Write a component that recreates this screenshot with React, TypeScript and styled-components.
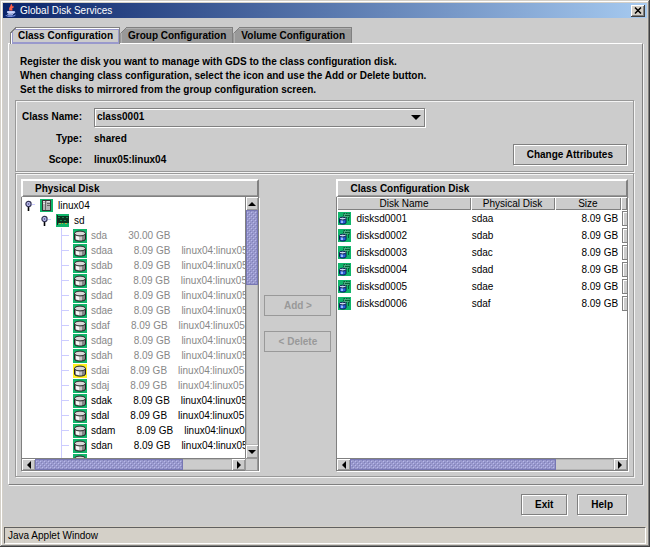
import React, { useState } from 'react';
import styled, { createGlobalStyle, css } from 'styled-components';

const GlobalStyle = createGlobalStyle`
  *, *::before, *::after { box-sizing: border-box; }
  body { margin: 0; background: #cccccc; }
  body, button, select, table {
    font-family: "Liberation Sans", Arial, sans-serif;
    font-size: 10px;
    line-height: 14px;
    color: #000;
  }
  button, select { margin: 0; padding: 0; border: 0; border-radius: 0; background: none; }
`;

const raised = css`
  border: 1px solid #808080;
  box-shadow: inset 1px 1px #fff, 1px 1px #fff;
`;

const etched = css`
  border: 1px solid #999;
  box-shadow: inset 1px 1px #f4f4f4, 1px 1px #f4f4f4;
`;

const Window = styled.div`
  display: flex;
  flex-direction: column;
  min-height: 100vh;
  padding: 3px;
  background: #d4d0c8;
  box-shadow: inset -1px -1px #404040, inset 1px 1px #d4d0c8, inset -2px -2px #808080, inset 2px 2px #fff;
`;

const TitleBar = styled.header`
  display: flex;
  align-items: center;
  gap: 3px;
  height: 15px;
  padding: 0 2px;
  color: #fff;
  background: linear-gradient(90deg, #0a246a, #a6caf0);
`;

const Title = styled.h1`
  flex: 1;
  margin: 0;
  font-size: 10px;
  font-weight: 400;
`;

const CloseButton = styled.button`
  display: flex;
  align-items: center;
  justify-content: center;
  width: 14px;
  height: 12px;
  background: #d4d0c8;
  box-shadow: inset -1px -1px #404040, inset 1px 1px #fff, inset -2px -2px #808080;
`;

const Body = styled.main`
  flex: 1;
  display: flex;
  flex-direction: column;
  padding: 9px 4px 11px 5px;
  background: #ccc;
`;

const TabList = styled.div`
  display: flex;
  padding-left: 2px;
`;

const Tab = styled.button<{ $active: boolean }>`
  position: relative;
  height: ${p => (p.$active ? 17 : 16)}px;
  margin-bottom: ${p => (p.$active ? -1 : 0)}px;
  padding: 0 6px 0 7px;
  z-index: ${p => (p.$active ? 1 : 0)};
  font-weight: 700;
  white-space: nowrap;
  border: 1px solid #808080;
  border-bottom: 0;
  background: ${p => (p.$active ? '#ccc' : '#999')};
  box-shadow: ${p =>
    p.$active
      ? 'inset 1px 1px #fff, inset 2px 2px #9999cc, inset -1px -2px #9999cc'
      : 'inset 1px 1px #b0b0b0'};

  & + & { border-left-color: #999; }

  &::before {
    content: '';
    position: absolute;
    top: -1px;
    left: -1px;
    width: 6px;
    height: 6px;
    background: linear-gradient(135deg, #ccc 0 50%, #808080 50% 64%, transparent 64%);
  }
`;

const TabPanel = styled.section`
  flex: 1;
  display: flex;
  flex-direction: column;
  padding: 11px 8px 7px 6px;
  border: 1px solid #fff;
  border-right-color: #808080;
  border-bottom-color: #808080;
  box-shadow: 1px 1px #f4f4f4;
`;

const Intro = styled.p`
  margin: 0 0 3px;
  padding-left: 5px;
  font-weight: 700;
`;

const Line = styled.span`
  display: block;
`;

const ClassBox = styled.div`
  display: flex;
  align-items: flex-end;
  gap: 88px;
  margin-bottom: 1px;
  padding: 5px 6px 2px 1px;
  ${etched}
`;

const Fields = styled.div`
  flex: 1;
  display: grid;
  grid-template-columns: 65px 1fr;
  column-gap: 12px;
  grid-template-rows: 22px 22px 19px;
  align-items: center;
  font-weight: 700;
`;

const FieldLabel = styled.label`
  text-align: right;
  white-space: nowrap;
`;

const FieldName = styled.span`
  text-align: right;
`;

const Combo = styled.div`
  position: relative;
  height: 19px;

  svg {
    position: absolute;
    right: 4px;
    top: 7px;
    pointer-events: none;
  }
`;

const Select = styled.select`
  appearance: none;
  width: 100%;
  height: 19px;
  padding: 0 20px 0 2px;
  font-weight: 700;
  ${raised}
`;

const Button = styled.button`
  height: 21px;
  padding: 0 13px;
  font-weight: 700;
  white-space: nowrap;
  ${raised}

  &:disabled {
    width: 100%;
    padding: 0;
    color: #999;
    border-color: #999;
    box-shadow: none;
  }
`;

const AttributeAction = styled.div`
  padding-bottom: 4px;
`;

const DiskBox = styled.div`
  flex: 1;
  display: grid;
  grid-template-columns: 238fr 67px 291fr;
  gap: 5px;
  padding: 5px;
  ${etched}
`;

const Pane = styled.section`
  min-width: 0;
  display: flex;
  flex-direction: column;
`;

const PaneTitle = styled.h2`
  height: 18px;
  margin: 0;
  padding: 1px 12px;
  font-size: 10px;
  font-weight: 700;
  border: 1px solid #808080;
  border-top: 2px solid #fff;
  border-left: 2px solid #fff;
  border-right: 2px solid #808080;
  box-shadow: inset 0 -1px #999;
`;

const ScrollGrid = styled.div<{ $vertical?: boolean }>`
  flex: 1;
  display: grid;
  grid-template-columns: minmax(0, 1fr) ${p => (p.$vertical ? '13px' : '')};
  grid-template-rows: minmax(259px, 1fr) 13px;
  border: 1px solid #808080;
  border-top: 0;
  border-bottom: 0;
  box-shadow: 1px 1px #fff;
  background: #ccc;
`;

const Viewport = styled.div`
  height: 0;
  min-height: 100%;
  overflow: hidden;
  background: #fff;
`;

const MiddleActions = styled.div`
  display: flex;
  flex-direction: column;
  gap: 15px;
  padding-top: 116px;
`;

const ScrollBar = styled.div<{ $dir: 'row' | 'column' }>`
  display: flex;
  flex-direction: ${p => p.$dir};
  border: 0 solid #808080;
  border-width: ${p => (p.$dir === 'row' ? '1px 0' : '0 0 0 1px')};
  min-width: 0;
  min-height: 0;
`;

const ScrollArrow = styled.button`
  flex: 0 0 13px;
  display: flex;
  align-items: center;
  justify-content: center;
  box-shadow: inset 1px 1px #fff, inset -1px -1px #999;
`;

const Track = styled.div<{ $dir: 'row' | 'column' }>`
  flex: 1;
  display: flex;
  flex-direction: ${p => p.$dir};
  box-shadow: inset 0 0 0 1px #b4b4b4;
`;

const Thumb = styled.div<{ $size: number }>`
  flex: 0 0 ${p => p.$size}%;
  min-width: 0;
  min-height: 0;
  overflow: hidden;
  border: 1px solid #7777b4;
  background: #9999cc;

  svg { display: block; width: 100%; height: 100%; }
`;

const Corner = styled.div`
  border: 1px solid #999;
`;

const TreeRoot = styled.ul`
  margin: 0;
  padding: 1px 0 0 3px;
  list-style: none;
`;

const Branch = styled.ul`
  margin: 0;
  padding: 0 0 0 16px;
  list-style: none;
`;

const Leaves = styled.ul`
  margin: 0 0 0 20px;
  padding: 0;
  list-style: none;
  border-left: 1px solid #ccccff;
`;

const Item = styled.li``;

const NodeRow = styled.div`
  display: flex;
  align-items: center;
  height: 15px;
  gap: 5px;
  white-space: nowrap;
`;

const LeafRow = styled.li<{ $dim: boolean }>`
  display: flex;
  align-items: center;
  height: 15px;
  white-space: nowrap;
  color: ${p => (p.$dim ? '#888' : '#000')};

  &::before {
    content: '';
    flex: 0 0 7px;
    height: 1px;
    margin-right: 4px;
    background: #ccccff;
  }

  svg { flex: none; }
`;

const LeafName = styled.span`
  margin: 0 21px 0 4px;
`;

const LeafSize = styled.span`
  margin-right: 11px;
`;

const DiskTable = styled.table`
  width: 100%;
  table-layout: fixed;
  border-collapse: collapse;
`;

const HeadCell = styled.th<{ $width: number }>`
  width: ${p => p.$width}%;
  height: 13px;
  padding: 0;
  line-height: 13px;
  font-weight: 400;
  white-space: nowrap;
  background: #ccc;
  box-shadow: inset 1px 1px #fff, inset -1px -1px #808080;
`;

const Cell = styled.td<{ $right?: boolean }>`
  height: 17px;
  padding: 0 3px 0 1px;
  line-height: 15px;
  text-align: ${p => (p.$right ? 'right' : 'left')};
  white-space: nowrap;
  overflow: hidden;
`;

const EdgeCell = styled.td`
  height: 17px;
  padding: 1px 0 1px 1px;
`;

const EdgeBox = styled.div`
  height: 15px;
  border: 1px solid #808080;
  border-right: 0;
  background: #ccc;
  box-shadow: inset 1px 1px #fff;
`;

const NameCell = styled.span`
  display: flex;
  align-items: center;
  gap: 5px;
`;

const Footer = styled.div`
  display: flex;
  justify-content: flex-end;
  gap: 10px;
  padding: 9px 16px 0 0;
`;

const StatusBar = styled.footer`
  height: 17px;
  margin: 1px 1px 0;
  padding: 0 3px;
  line-height: 16px;
  border-top: 1px solid #606060;
  border-left: 1px solid #606060;
  border-bottom: 1px solid #fff;
  border-right: 1px solid #fff;
`;

const JavaLogo = () => (
  <svg width="12" height="13" viewBox="0 0 12 13" fill="none" aria-hidden="true">
    <path d="M6 0.5C8 2.5 3 3.5 5.5 6.5M8.5 2.5C6 4 6 4.5 7 6.5" stroke="#ff6048" strokeWidth="1.6" />
    <path d="M2.500 7.500h6v1.200c0 1-6 1-6 0zM8.500 7.500c2-.4 2 1.400-.4 1.900M2.500 10.500c1 .8 4.500.8 5.500 0" fill="#c8d4ff" stroke="#c8d4ff" strokeWidth="0.9" />
    <path d="M1 11c-.5 1.800 8.500 1.800 9.500 0" stroke="#8fa6ff" />
  </svg>
);

const CloseIcon = () => (
  <svg width="8" height="7" viewBox="0 0 8 7" aria-hidden="true">
    <path d="M1 0.500L7 6.500M7 0.500L1 6.500" stroke="#000" strokeWidth="1.500" />
  </svg>
);

const ARROWS = {
  left: 'M6 0v8L2 4z',
  right: 'M2 0v8L6 4z',
  up: 'M0 6h8L4 2z',
  down: 'M0 2h8L4 6z',
};

const Arrow = ({ to }: { to: keyof typeof ARROWS }) => (
  <svg width="8" height="8" viewBox="0 0 8 8" aria-hidden="true"><path d={ARROWS[to]} /></svg>
);

const ComboArrow = () => (
  <svg width="10" height="5" viewBox="0 0 10 5" aria-hidden="true"><path d="M0 0h10L5 5z" /></svg>
);

const Handle = () => (
  <svg width="10" height="13" viewBox="0 0 10 13" fill="none" aria-hidden="true">
    <path d="M3.500 7v5" stroke="#000" strokeWidth="1.600" />
    <path d="M7 5.500h3" stroke="#ccccff" />
    <circle cx="3.500" cy="5" r="2.600" fill="#ccccff" stroke="#333355" strokeWidth="1.200" />
    <circle cx="3.500" cy="5" r="1" fill="#666699" />
  </svg>
);

const ServerIcon = () => (
  <svg width="13" height="13" viewBox="0 0 13 13" aria-hidden="true">
    <path fill="#10b56a" d="M0 0h13v13H0z" />
    <path fill="#333" d="M2 1h9v11H2z" />
    <path fill="#b4b4b4" d="M3 2h3v9H3zM6 2h4v9H6z" />
    <path fill="#e4e4e4" d="M3 2h3v1H3zM7 2h3v1H7zM3 4h2v1H3z" />
    <path fill="#666" d="M7 4h3v1H7zM5 2h1v9H5zM7 6h3v1H7z" />
  </svg>
);

const AdapterIcon = () => (
  <svg width="13" height="13" viewBox="0 0 13 13" aria-hidden="true">
    <path fill="#10b56a" d="M0 0h13v13H0z" />
    <path fill="#0b3320" d="M1 2h12v7H1z" />
    <path fill="#19864f" d="M2 3h2v1H2zM6 3h2v1H6zM10 3h2v1h-2zM4 6h2v1H4zM8 6h2v1H8z" />
    <path fill="#c0a838" d="M3 9h2v1H3zM6 9h1v1H6zM9 9h2v1H9z" />
    <path fill="#222" d="M1 1h1v10H1z" />
  </svg>
);

const DiskIcon = ({ spare }: { spare?: boolean }) => (
  <svg width="14" height="14" viewBox="0 0 14 14" aria-hidden="true">
    <path fill={spare ? '#ffee20' : '#10b56a'} d="M0 0h14v14H0z" />
    <path fill="#858585" stroke="#222" d="M1.500 4.500v5.500c0 2.800 11 2.800 11 0V4.500z" />
    <path fill="#f6f6f6" d="M3 6.500h3v4.700l-3-.8z" />
    <path fill="#c4c4c4" d="M6 6.800h3v4.500H6z" />
    <ellipse cx="7" cy="4.500" rx="5.500" ry="2.400" fill="#d8d8d8" stroke="#222" />
  </svg>
);

const ClassDiskIcon = () => (
  <svg width="13" height="13" viewBox="0 0 13 13" aria-hidden="true">
    <path fill="#10b56a" d="M0 0h13v13H0z" />
    <path fill="#4aa880" stroke="#0a5c38" strokeDasharray="1.500 1" d="M5.500 1.500h6v4h-6z" />
    <path stroke="#006633" d="M7 3.500h4M10.500 6v3" />
    <path fill="#2a62d8" stroke="#0a1c50" d="M1.500 7v3.500c0 2 6.500 2 6.500 0V7z" />
    <path fill="#90b8ff" d="M3 8h2v3H3z" />
    <ellipse cx="4.700" cy="6.600" rx="3.300" ry="1.400" fill="#c8d8f0" stroke="#0a1c50" />
  </svg>
);

const Bumps = ({ id }: { id: string }) => (
  <svg aria-hidden="true">
    <defs>
      <pattern id={id} width="4" height="4" patternUnits="userSpaceOnUse">
        <path fill="#b8b8ee" d="M0 1h1v1H0zM2 3h1v1H2z" />
        <path fill="#8080bc" d="M1 2h1v1H1zM3 0h1v1H3z" />
      </pattern>
    </defs>
    <rect width="100%" height="100%" fill={`url(#${id})`} />
  </svg>
);

const Scroll = ({ id, dir, size }: { id: string; dir: 'row' | 'column'; size: number }) => (
  <ScrollBar $dir={dir}>
    <ScrollArrow aria-label={dir === 'row' ? 'Scroll left' : 'Scroll up'}>
      <Arrow to={dir === 'row' ? 'left' : 'up'} />
    </ScrollArrow>
    <Track $dir={dir}>
      <Thumb $size={size}><Bumps id={id} /></Thumb>
    </Track>
    <ScrollArrow aria-label={dir === 'row' ? 'Scroll right' : 'Scroll down'}>
      <Arrow to={dir === 'row' ? 'right' : 'down'} />
    </ScrollArrow>
  </ScrollBar>
);

const TABS = ['Class Configuration', 'Group Configuration', 'Volume Configuration'];

const FREE = ['sdak', 'sdal', 'sdam', 'sdan'];

const PHYSICAL_DISKS = [
  'sda', 'sdaa', 'sdab', 'sdac', 'sdad', 'sdae', 'sdaf', 'sdag', 'sdah', 'sdai', 'sdaj', ...FREE,
].map(name => ({
  name,
  size: name === 'sda' ? '30.00 GB' : '8.09 GB',
  nodes: name === 'sda' ? '' : 'linux04:linux05',
  dim: !FREE.includes(name),
  spare: name === 'sdai',
}));

const CLASS_DISKS = ['sdaa', 'sdab', 'sdac', 'sdad', 'sdae', 'sdaf'].map((device, i) => ({
  name: `disksd000${i + 1}`,
  device,
  size: '8.09 GB',
}));

export default function App() {
  const [tab, setTab] = useState(0);

  return (
    <Window>
      <GlobalStyle />
      <TitleBar>
        <JavaLogo />
        <Title>Global Disk Services</Title>
        <CloseButton aria-label="Close"><CloseIcon /></CloseButton>
      </TitleBar>
      <Body>
        <TabList role="tablist">
          {TABS.map((name, i) => (
            <Tab key={name} role="tab" aria-selected={i === tab} $active={i === tab} onClick={() => setTab(i)}>
              {name}
            </Tab>
          ))}
        </TabList>
        <TabPanel role="tabpanel">
          <Intro>
            <Line>Register the disk you want to manage with GDS to the class configuration disk.</Line>
            <Line>When changing class configuration, select the icon and use the Add or Delete button.</Line>
            <Line>Set the disks to mirrored from the group configuration screen.</Line>
          </Intro>
          <ClassBox>
            <Fields>
              <FieldLabel htmlFor="class-name">Class Name:</FieldLabel>
              <Combo>
                <Select id="class-name"><option>class0001</option></Select>
                <ComboArrow />
              </Combo>
              <FieldName>Type:</FieldName>
              <span>shared</span>
              <FieldName>Scope:</FieldName>
              <span>linux05:linux04</span>
            </Fields>
            <AttributeAction><Button>Change Attributes</Button></AttributeAction>
          </ClassBox>
          <DiskBox>
            <Pane>
              <PaneTitle>Physical Disk</PaneTitle>
              <ScrollGrid $vertical>
                <Viewport>
                  <TreeRoot>
                    <Item>
                      <NodeRow><Handle /><ServerIcon />linux04</NodeRow>
                      <Branch>
                        <Item>
                          <NodeRow><Handle /><AdapterIcon />sd</NodeRow>
                          <Leaves>
                            {PHYSICAL_DISKS.map(d => (
                              <LeafRow key={d.name} $dim={d.dim}>
                                <DiskIcon spare={d.spare} />
                                <LeafName>{d.name}</LeafName>
                                <LeafSize>{d.size}</LeafSize>
                                {d.nodes}
                              </LeafRow>
                            ))}
                            <LeafRow $dim={false}><DiskIcon /></LeafRow>
                          </Leaves>
                        </Item>
                      </Branch>
                    </Item>
                  </TreeRoot>
                </Viewport>
                <Scroll id="bumps-tree-v" dir="column" size={32} />
                <Scroll id="bumps-tree-h" dir="row" size={75} />
                <Corner />
              </ScrollGrid>
            </Pane>
            <MiddleActions>
              <Button disabled>Add &gt;</Button>
              <Button disabled>&lt; Delete</Button>
            </MiddleActions>
            <Pane>
              <PaneTitle>Class Configuration Disk</PaneTitle>
              <ScrollGrid>
                <Viewport>
                  <DiskTable>
                    <thead>
                      <tr>
                        <HeadCell $width={46}>Disk Name</HeadCell>
                        <HeadCell $width={29}>Physical Disk</HeadCell>
                        <HeadCell $width={23}>Size</HeadCell>
                        <HeadCell $width={2} />
                      </tr>
                    </thead>
                    <tbody>
                      {CLASS_DISKS.map(d => (
                        <tr key={d.name}>
                          <Cell><NameCell><ClassDiskIcon />{d.name}</NameCell></Cell>
                          <Cell>{d.device}</Cell>
                          <Cell $right>{d.size}</Cell>
                          <EdgeCell><EdgeBox /></EdgeCell>
                        </tr>
                      ))}
                    </tbody>
                  </DiskTable>
                </Viewport>
                <Scroll id="bumps-table-h" dir="row" size={78} />
              </ScrollGrid>
            </Pane>
          </DiskBox>
        </TabPanel>
        <Footer>
          <Button>Exit</Button>
          <Button>Help</Button>
        </Footer>
      </Body>
      <StatusBar>Java Applet Window</StatusBar>
    </Window>
  );
}
